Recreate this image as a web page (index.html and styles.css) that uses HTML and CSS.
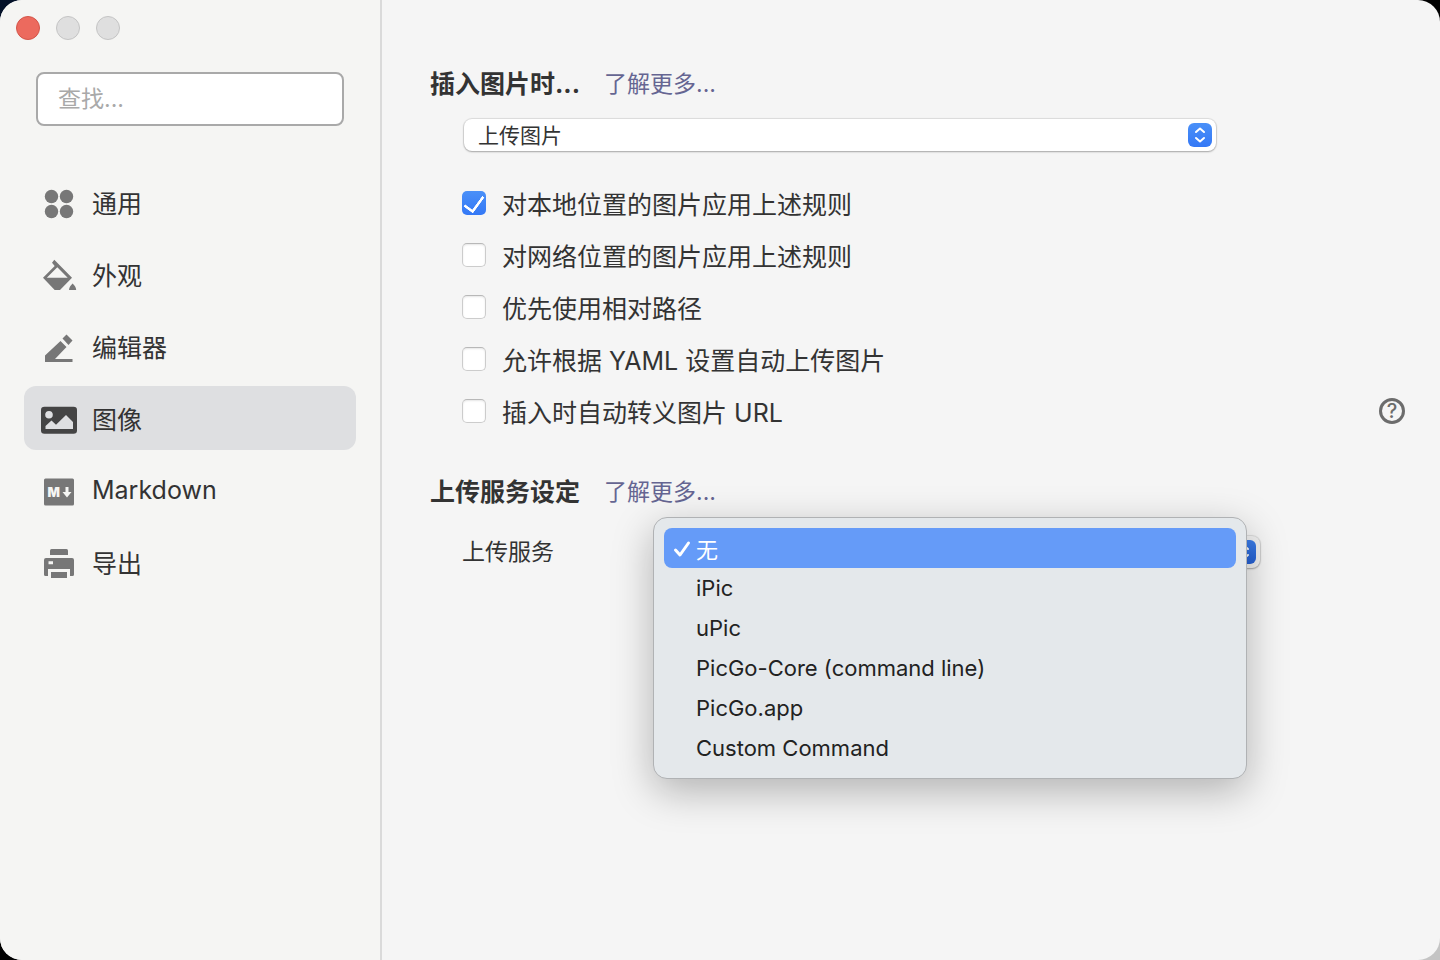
FILE: index.html
```html
<!DOCTYPE html>
<html lang="zh-CN">

<head>
    <meta charset="UTF-8">
    <meta name="viewport" content="width=device-width, initial-scale=1.0">
    <title>偏好设置</title>
    <link rel="stylesheet" href="styles.css">
</head>

<body>
    <div class="window">
        <aside class="sidebar">
            <div class="window-controls">
                <button class="control close" aria-label="关闭"></button>
                <button class="control" aria-label="最小化" disabled></button>
                <button class="control" aria-label="缩放" disabled></button>
            </div>

            <input type="text" class="search" placeholder="查找..." aria-label="查找">

            <nav class="menu">
                <button class="menu-item">
                    <svg class="icon" viewBox="0 0 36 36">
                        <circle cx="10.500" cy="10.500" r="6.700" />
                        <circle cx="25.500" cy="10.500" r="6.700" />
                        <circle cx="10.500" cy="25.500" r="6.700" />
                        <circle cx="25.500" cy="25.500" r="6.700" />
                    </svg>
                    <span>通用</span>
                </button>
                <button class="menu-item">
                    <svg class="icon" viewBox="0 0 36 36">
                        <path d="M13.300 1.700L31 19.700L19 32H13.700L2 19.700L13.700 8L11 4.700ZM16.300 9.200L5.800 19.700H26.700Z" fill-rule="evenodd" />
                        <path d="M31.600 25.500C33.500 27.500 35.200 29.500 35.200 32H28C28 29.500 29.700 27.500 31.600 25.500Z" />
                    </svg>
                    <span>外观</span>
                </button>
                <button class="menu-item">
                    <svg class="icon" viewBox="0 0 36 36">
                        <path d="M4 32V25.500L19.500 11L25.500 17L14 29H31.500V32Z" />
                        <path d="M21.500 8.500L25.500 4.500L31.500 10.500L27.500 15Z" />
                    </svg>
                    <span>编辑器</span>
                </button>
                <button class="menu-item active">
                    <svg class="icon" viewBox="0 0 36 36">
                        <path d="M3.500 4.700H32.500Q36 4.700 36 8V28.500Q36 31.800 32.500 31.800H3.500Q0 31.800 0 28.500V8Q0 4.700 3.500 4.700ZM8 9A3.800 3.800 0 1 0 8 16.600A3.800 3.800 0 1 0 8 9ZM4.500 27H32V20L25 13L15 22.800L10.500 18.500L4.500 24Z" fill-rule="evenodd" />
                    </svg>
                    <span>图像</span>
                </button>
                <button class="menu-item">
                    <svg class="icon" viewBox="0 0 36 36">
                        <rect x="3" y="4.500" width="30" height="27" rx="1.500" />
                        <text class="icon-letter" x="6.500" y="23">M</text>
                        <path class="icon-arrow" d="M24.500 13H27.500V18H30.500L26 23.500L21.500 18H24.500Z" />
                    </svg>
                    <span>Markdown</span>
                </button>
                <button class="menu-item">
                    <svg class="icon" viewBox="0 0 36 36">
                        <path d="M9 9V4.500Q9 3 10.500 3H25.500Q27 3 27 4.500V9Z" />
                        <path d="M5 12H31Q33 12 33 14V28.500Q33 30 31.500 30H29V23H7V30H4.500Q3 30 3 28.500V14Q3 12 5 12ZM7.500 15.200V18.200H12V15.200Z" fill-rule="evenodd" />
                        <rect x="10" y="26" width="16" height="6" />
                    </svg>
                    <span>导出</span>
                </button>
            </nav>
        </aside>

        <main class="content">
            <section class="section">
                <div class="section-title">
                    <h2>插入图片时...</h2>
                    <a href="#">了解更多...</a>
                </div>

                <div class="select-box insert-select">
                    <select aria-label="插入图片时">
                        <option>上传图片</option>
                        <option>无特殊操作</option>
                    </select>
                    <svg class="arrows" viewBox="0 0 24 24">
                        <path d="M8 9L12 5.500L16 9M8 15L12 18.500L16 15" />
                    </svg>
                </div>

                <div class="options">
                    <label class="option"><input type="checkbox" checked><span>对本地位置的图片应用上述规则</span></label>
                    <label class="option"><input type="checkbox"><span>对网络位置的图片应用上述规则</span></label>
                    <label class="option"><input type="checkbox"><span>优先使用相对路径</span></label>
                    <label class="option"><input type="checkbox"><span>允许根据 YAML 设置自动上传图片</span></label>
                    <div class="option-row">
                        <label class="option"><input type="checkbox"><span>插入时自动转义图片 URL</span></label>
                        <button class="help" aria-label="帮助">?</button>
                    </div>
                </div>
            </section>

            <section class="section">
                <div class="section-title">
                    <h2>上传服务设定</h2>
                    <a href="#">了解更多...</a>
                </div>

                <div class="service">
                    <label for="service">上传服务</label>
                    <div class="select-box service-select">
                        <select id="service">
                            <option>无</option>
                            <option>iPic</option>
                            <option>uPic</option>
                            <option>PicGo-Core (command line)</option>
                            <option>PicGo.app</option>
                            <option>Custom Command</option>
                        </select>
                        <svg class="arrows" viewBox="0 0 24 24">
                            <path d="M8 9L12 5.500L16 9M8 15L12 18.500L16 15" />
                        </svg>
                        <div class="dropdown">
                            <button class="selected">
                                <svg class="tick" viewBox="0 0 18 18">
                                    <path d="M2.500 10L7 15L15.500 3" />
                                </svg>
                                无
                            </button>
                            <button>iPic</button>
                            <button>uPic</button>
                            <button>PicGo-Core (command line)</button>
                            <button>PicGo.app</button>
                            <button>Custom Command</button>
                        </div>
                    </div>
                </div>
            </section>
        </main>
    </div>
</body>

</html>
```

FILE: styles.css
```css
* {
    box-sizing: border-box;
}

body {
    margin: 0;
    background: linear-gradient(135deg, #04122a 0%, #000 20%, #000 80%, #c4c4c4 98%);
    color: #333;
    font-family: Inter, "Noto Sans CJK SC", sans-serif;
    font-size: 25px;
}

button,
input,
select {
    font-family: inherit;
    color: inherit;
}

.window {
    display: flex;
    min-height: 100vh;
    border-radius: 22px;
    background-color: #f5f5f5;
    overflow: hidden;
}

/* Sidebar */

.sidebar {
    flex: 0 0 382px;
    padding: 16px 24px;
    background-color: #f5f5f3;
    border-right: 2px solid #dadada;
}

.window-controls {
    display: flex;
    gap: 16px;
    margin-left: -8px;
}

.control {
    width: 24px;
    height: 24px;
    padding: 0;
    border: 1px solid #c4c4c4;
    border-radius: 50%;
    background-color: #dfdfdf;
}

.control.close {
    background-color: #ec6a5e;
    border-color: #d35549;
}

.search {
    display: block;
    width: 308px;
    height: 54px;
    margin: 32px 12px 44px;
    padding: 0 20px;
    border: 2px solid #a9a9a9;
    border-radius: 8px;
    background-color: #fff;
    font-size: 23px;
}

.search::placeholder {
    color: #a9a9a9;
}

.menu {
    display: flex;
    flex-direction: column;
    gap: 8px;
}

.menu-item {
    display: flex;
    align-items: center;
    gap: 15px;
    height: 64px;
    padding: 0 17px;
    border: none;
    border-radius: 12px;
    background: none;
    font-size: 25px;
    text-align: left;
}

.menu-item.active {
    background-color: #dedfe1;
}

.icon {
    width: 36px;
    height: 36px;
    margin-top: 4px;
    fill: #777;
}

.active .icon {
    fill: #444;
}

.icon-letter {
    font-family: Inter, sans-serif;
    font-size: 13px;
    font-weight: 900;
    fill: #f5f5f3;
}

.icon-arrow {
    fill: #f5f5f3;
}

/* Content */

.content {
    flex: 1;
    padding: 62px 35px 62px 48px;
}

.section {
    margin-bottom: 33px;
}

.section-title {
    display: flex;
    align-items: center;
    gap: 24px;
    height: 40px;
}

.section-title h2 {
    margin: 0;
    font-size: 25px;
    font-weight: 700;
}

.section-title a {
    color: #656592;
    font-size: 23px;
    text-decoration: none;
}

.select-box {
    position: relative;
    height: 32px;
}

.select-box select {
    display: block;
    width: 100%;
    height: 100%;
    padding: 0 40px 0 14px;
    appearance: none;
    border: none;
    border-radius: 8px;
    background-color: #fff;
    box-shadow: 0 0 1px 1px rgba(0, 0, 0, 0.1), 0 1px 2px rgba(0, 0, 0, 0.25);
    font-size: 21px;
}

.arrows {
    position: absolute;
    top: 4px;
    right: 4px;
    width: 24px;
    height: 24px;
    border-radius: 6px;
    background: linear-gradient(#4a90f8, #3478f6);
    fill: none;
    stroke: #fff;
    stroke-width: 2;
    stroke-linecap: round;
    stroke-linejoin: round;
    pointer-events: none;
}

.insert-select {
    margin: 17px 189px 26px 34px;
}

.options {
    margin-left: 32px;
}

.option {
    display: flex;
    align-items: center;
    gap: 16px;
    height: 52px;
}

.option input {
    width: 24px;
    height: 24px;
    margin: 0;
    appearance: none;
    border: 1px solid #ccc;
    border-top-color: #b8b8b8;
    border-radius: 5px;
    background-color: #fff;
    box-shadow: inset 0 1px 2px rgba(0, 0, 0, 0.1);
}

.option input:checked {
    display: grid;
    place-items: center;
    padding-bottom: 3px;
    border: none;
    background: linear-gradient(#4a90f8, #3478f6);
    box-shadow: none;
}

.option input:checked::before {
    content: "";
    width: 9px;
    height: 17px;
    border: solid #fff;
    border-width: 0 3px 3px 0;
    border-radius: 1px;
    transform: rotate(36deg);
}

.option-row {
    display: flex;
    align-items: center;
    justify-content: space-between;
}

.help {
    width: 26px;
    height: 26px;
    padding: 0;
    border: 3px solid #6c6c6c;
    border-radius: 50%;
    background: none;
    color: #6c6c6c;
    font-size: 20px;
    font-weight: 500;
    line-height: 20px;
}

.service {
    display: flex;
    align-items: center;
    margin: 26px 145px 0 32px;
}

.service label {
    width: 200px;
    font-size: 23px;
    line-height: 32px;
}

.service-select {
    flex: 1;
}

.service-select select {
    background-color: #f0f0f0;
}

.service-select .arrows {
    background: linear-gradient(#3c7de8, #2460d4);
}

.dropdown {
    position: absolute;
    top: -19px;
    left: -9px;
    right: 13px;
    display: flex;
    flex-direction: column;
    padding: 10px;
    border: 1px solid #b0b2b4;
    border-radius: 14px;
    background-color: #e4e8eb;
    box-shadow: 0 12px 40px rgba(0, 0, 0, 0.28);
}

.dropdown button {
    position: relative;
    height: 40px;
    padding: 0 32px;
    border: none;
    border-radius: 8px;
    background: none;
    color: #222;
    font-size: 22px;
    text-align: left;
}

.dropdown .selected {
    background-color: #659bf8;
    color: #fff;
}

.tick {
    position: absolute;
    top: 12px;
    left: 9px;
    width: 18px;
    height: 18px;
    fill: none;
    stroke: #fff;
    stroke-width: 3;
    stroke-linecap: round;
    stroke-linejoin: round;
}
```
